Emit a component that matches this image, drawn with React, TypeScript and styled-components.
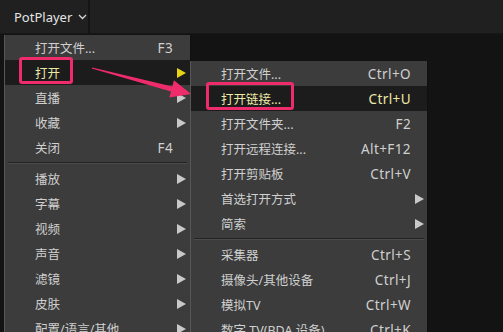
import React from "react";
import styled, { createGlobalStyle } from "styled-components";

const Global = createGlobalStyle`
  html, body { margin: 0; padding: 0; background: #131313; }
  body { width: 503px; height: 332px; overflow: hidden; }
`;

const Page = styled.div`
  width: 503px;
  height: 332px;
  display: flex;
  flex-direction: column;
  background: #131313;
  font-family: "Noto Sans", "Noto Sans CJK SC", sans-serif;
  overflow: hidden;
  position: relative;
`;

const TopBar = styled.div`
  height: 33px;
  flex: none;
  display: flex;
  align-items: stretch;
  background: #202020;
  border-bottom: 1px solid #171717;
`;

const AppButton = styled.div`
  width: 90px;
  display: flex;
  align-items: center;
  gap: 6px;
  padding-left: 14px;
  box-sizing: border-box;
  color: #e4e4e4;
  font-size: 13px;
  border-right: 2px solid #151515;
`;

const Canvas = styled.div`
  flex: 1;
  position: relative;
`;

const Menu = styled.div<{ $left: number; $top: number; $width: number }>`
  position: absolute;
  left: ${(p) => p.$left}px;
  top: ${(p) => p.$top}px;
  width: ${(p) => p.$width}px;
  background: #3c3c3c;
  border-left: 1px solid #575757;
  border-right: 1px solid #101010;
  box-sizing: border-box;
  display: flex;
  flex-direction: column;
`;

const Row = styled.div<{ $active?: boolean; $pl: number; $pr: number }>`
  height: 25px;
  flex: none;
  display: flex;
  align-items: center;
  padding-left: ${(p) => p.$pl}px;
  padding-right: ${(p) => p.$pr}px;
  background: ${(p) => (p.$active ? "#1c1c1c" : "transparent")};
  color: ${(p) => (p.$active ? "#ece9a6" : "#d0d0d0")};
  font-size: 12.5px;
  white-space: nowrap;
`;

const Label = styled.span`
  flex: 1;
`;

const Shortcut = styled.span`
  font-size: 13.5px;
  letter-spacing: 0.4px;
`;

const ArrowSlot = styled.span`
  width: 13px;
  display: flex;
  justify-content: flex-end;
`;

const Tri = styled.span<{ $active?: boolean }>`
  width: 0;
  height: 0;
  border-top: 5px solid transparent;
  border-bottom: 5px solid transparent;
  border-left: 9px solid ${(p) => (p.$active ? "#e8d416" : "#c9c9c9")};
`;

const Sep = styled.div`
  height: 6px;
  flex: none;
  display: flex;
  flex-direction: column;
  justify-content: center;
  padding: 0 3px;
  &::before {
    content: "";
    height: 1px;
    background: #232323;
  }
  &::after {
    content: "";
    height: 1px;
    background: #4c4c4c;
  }
`;

const Mark = styled.div<{ $l: number; $t: number; $w: number; $h: number }>`
  position: absolute;
  left: ${(p) => p.$l}px;
  top: ${(p) => p.$t}px;
  width: ${(p) => p.$w}px;
  height: ${(p) => p.$h}px;
  border: 3px solid #ee2c6c;
  border-radius: 3px;
  box-sizing: border-box;
`;

const ArrowSvg = styled.svg`
  position: absolute;
  left: 0;
  top: 0;
  pointer-events: none;
`;

type Item =
  | { sep: true }
  | { label: string; key?: string; sub?: boolean; active?: boolean; sep?: false };

const mainItems: Item[] = [
  { label: "打开文件...", key: "F3" },
  { label: "打开", sub: true, active: true },
  { label: "直播", sub: true },
  { label: "收藏", sub: true },
  { label: "关闭", key: "F4" },
  { sep: true },
  { label: "播放", sub: true },
  { label: "字幕", sub: true },
  { label: "视频", sub: true },
  { label: "声音", sub: true },
  { label: "滤镜", sub: true },
  { label: "皮肤", sub: true },
  { label: "配置/语言/其他", sub: true },
];

const subItems: Item[] = [
  { label: "打开文件...", key: "Ctrl+O" },
  { label: "打开链接...", key: "Ctrl+U", active: true },
  { label: "打开文件夹...", key: "F2" },
  { label: "打开远程连接...", key: "Alt+F12" },
  { label: "打开剪贴板", key: "Ctrl+V" },
  { label: "首选打开方式", sub: true },
  { label: "简索", sub: true },
  { sep: true },
  { label: "采集器", key: "Ctrl+S" },
  { label: "摄像头/其他设备", key: "Ctrl+J" },
  { label: "模拟TV", key: "Ctrl+W" },
  { label: "数字 TV(BDA 设备)", key: "Ctrl+K" },
];

function MenuList({ items, pl, pr }: { items: Item[]; pl: number; pr: number }) {
  return (
    <>
      {items.map((it, i) =>
        it.sep ? (
          <Sep key={i} />
        ) : (
          <Row key={i} $active={it.active} $pl={pl} $pr={pr}>
            <Label>{it.label}</Label>
            {it.key && <Shortcut>{it.key}</Shortcut>}
            {it.sub ? (
              <ArrowSlot>
                <Tri $active={it.active} />
              </ArrowSlot>
            ) : (
              <ArrowSlot />
            )}
          </Row>
        )
      )}
    </>
  );
}

export default function App() {
  const sx = 92, sy = 68, tx = 191, ty = 94;
  const dx = tx - sx, dy = ty - sy;
  const len = Math.hypot(dx, dy);
  const ux = dx / len, uy = dy / len;
  const px = -uy, py = ux;
  const hl = 20, hw = 9;
  const bx = tx - hl * ux, by = ty - hl * uy;
  const pts = [
    [sx + 0.6 * px, sy + 0.6 * py],
    [bx + 2.6 * px, by + 2.6 * py],
    [bx + hw * px, by + hw * py],
    [tx, ty],
    [bx - hw * px, by - hw * py],
    [bx - 2.6 * px, by - 2.6 * py],
    [sx - 0.6 * px, sy - 0.6 * py],
  ]
    .map(([x, y]) => `${x.toFixed(1)},${y.toFixed(1)}`)
    .join(" ");

  return (
    <Page>
      <Global />
      <TopBar>
        <AppButton>
          PotPlayer
          <svg width="9" height="6" viewBox="0 0 9 6">
            <path d="M1 1 L4.5 4.5 L8 1" stroke="#d8d8d8" strokeWidth="1.3" fill="none" />
          </svg>
        </AppButton>
      </TopBar>
      <Canvas>
        <Menu $left={4} $top={1} $width={187}>
          <MenuList items={mainItems} pl={30} pr={4} />
        </Menu>
        <Menu $left={190} $top={27} $width={238}>
          <MenuList items={subItems} pl={30} pr={3} />
        </Menu>
      </Canvas>
      <Mark $l={19} $t={57} $w={54} $h={27} />
      <Mark $l={206} $t={82} $w={88} $h={28} />
      <ArrowSvg width="503" height="332" viewBox="0 0 503 332">
        <polygon points={pts} fill="#ee2c6c" />
      </ArrowSvg>
    </Page>
  );
}
